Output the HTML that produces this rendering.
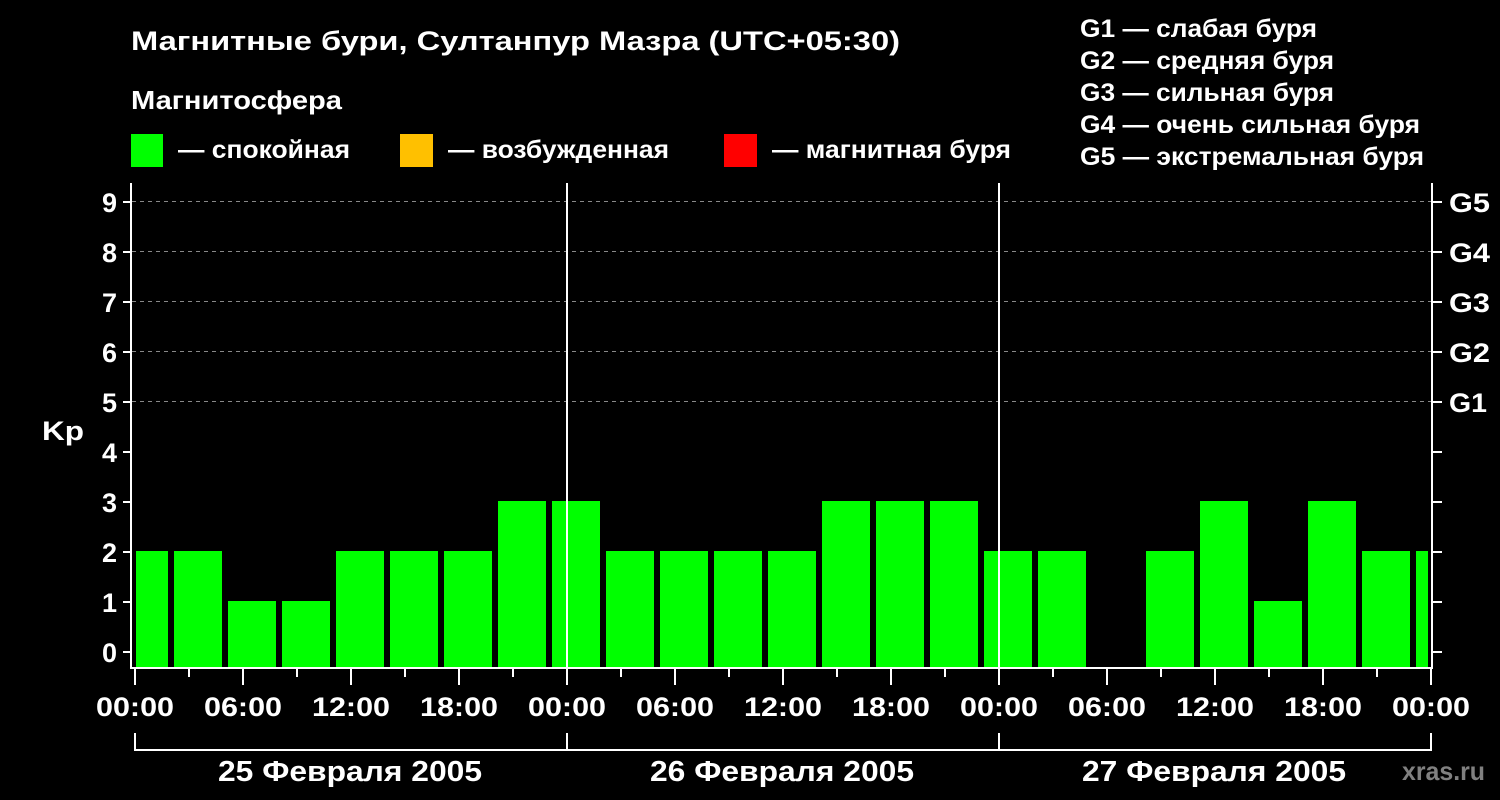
<!DOCTYPE html>
<html><head><meta charset="utf-8"><style>
html,body{margin:0;padding:0;background:#000;}
svg{display:block;}
text{font-family:"Liberation Sans",sans-serif;font-weight:bold;fill:#fff;}
</style></head><body>
<svg width="1500" height="800" viewBox="0 0 1500 800" xmlns="http://www.w3.org/2000/svg">
<rect width="1500" height="800" fill="#000"/>
<text x="131" y="50" font-size="27" textLength="769" lengthAdjust="spacingAndGlyphs">Магнитные бури, Султанпур Мазра (UTC+05:30)</text>
<text x="131" y="109" font-size="26" textLength="211" lengthAdjust="spacingAndGlyphs">Магнитосфера</text>
<rect x="131" y="134" width="32" height="33" fill="#00ff00"/>
<text x="178" y="158" font-size="25" textLength="172" lengthAdjust="spacingAndGlyphs">— спокойная</text>
<rect x="400" y="134" width="33" height="33" fill="#ffc000"/>
<text x="448" y="158" font-size="25" textLength="221" lengthAdjust="spacingAndGlyphs">— возбужденная</text>
<rect x="724" y="134" width="33" height="33" fill="#ff0000"/>
<text x="772" y="158" font-size="25" textLength="239" lengthAdjust="spacingAndGlyphs">— магнитная буря</text>
<g font-size="25">
<text x="1080" y="37" textLength="237" lengthAdjust="spacingAndGlyphs">G1 — слабая буря</text>
<text x="1080" y="69" textLength="254" lengthAdjust="spacingAndGlyphs">G2 — средняя буря</text>
<text x="1080" y="101" textLength="254" lengthAdjust="spacingAndGlyphs">G3 — сильная буря</text>
<text x="1080" y="133" textLength="340" lengthAdjust="spacingAndGlyphs">G4 — очень сильная буря</text>
<text x="1080" y="165" textLength="344" lengthAdjust="spacingAndGlyphs">G5 — экстремальная буря</text>
</g>
<g stroke="#888" stroke-width="1" stroke-dasharray="4,4">
<line x1="132" y1="201.5" x2="1432" y2="201.5"/>
<line x1="132" y1="251.5" x2="1432" y2="251.5"/>
<line x1="132" y1="301.5" x2="1432" y2="301.5"/>
<line x1="132" y1="351.5" x2="1432" y2="351.5"/>
<line x1="132" y1="401.5" x2="1432" y2="401.5"/>
</g>
<g fill="#00ff00">
<rect x="136" y="551" width="32" height="117"/>
<rect x="174" y="551" width="48" height="117"/>
<rect x="228" y="601" width="48" height="67"/>
<rect x="282" y="601" width="48" height="67"/>
<rect x="336" y="551" width="48" height="117"/>
<rect x="390" y="551" width="48" height="117"/>
<rect x="444" y="551" width="48" height="117"/>
<rect x="498" y="501" width="48" height="167"/>
<rect x="552" y="501" width="48" height="167"/>
<rect x="606" y="551" width="48" height="117"/>
<rect x="660" y="551" width="48" height="117"/>
<rect x="714" y="551" width="48" height="117"/>
<rect x="768" y="551" width="48" height="117"/>
<rect x="822" y="501" width="48" height="167"/>
<rect x="876" y="501" width="48" height="167"/>
<rect x="930" y="501" width="48" height="167"/>
<rect x="984" y="551" width="48" height="117"/>
<rect x="1038" y="551" width="48" height="117"/>
<rect x="1146" y="551" width="48" height="117"/>
<rect x="1200" y="501" width="48" height="167"/>
<rect x="1254" y="601" width="48" height="67"/>
<rect x="1308" y="501" width="48" height="167"/>
<rect x="1362" y="551" width="48" height="117"/>
<rect x="1416" y="551" width="12" height="117"/>
</g>
<g stroke="#fff" stroke-width="2" fill="none">
<polyline points="131,183 131,668 1432,668 1432,183"/>
<line x1="567" y1="183" x2="567" y2="668"/>
<line x1="999" y1="183" x2="999" y2="668"/>
<polyline points="135,733 135,750 1431,750 1431,733"/>
<line x1="567" y1="733" x2="567" y2="750"/>
<line x1="999" y1="733" x2="999" y2="750"/>
</g>
<g stroke="#fff" stroke-width="2">
<line x1="123" y1="652" x2="131" y2="652"/><line x1="123" y1="602" x2="131" y2="602"/>
<line x1="123" y1="552" x2="131" y2="552"/><line x1="123" y1="502" x2="131" y2="502"/>
<line x1="123" y1="452" x2="131" y2="452"/><line x1="123" y1="402" x2="131" y2="402"/>
<line x1="123" y1="352" x2="131" y2="352"/><line x1="123" y1="302" x2="131" y2="302"/>
<line x1="123" y1="252" x2="131" y2="252"/><line x1="123" y1="202" x2="131" y2="202"/>
<line x1="1432" y1="652" x2="1442" y2="652"/><line x1="1432" y1="602" x2="1442" y2="602"/>
<line x1="1432" y1="552" x2="1442" y2="552"/><line x1="1432" y1="502" x2="1442" y2="502"/>
<line x1="1432" y1="452" x2="1442" y2="452"/><line x1="1432" y1="402" x2="1442" y2="402"/>
<line x1="1432" y1="352" x2="1442" y2="352"/><line x1="1432" y1="302" x2="1442" y2="302"/>
<line x1="1432" y1="252" x2="1442" y2="252"/><line x1="1432" y1="202" x2="1442" y2="202"/>
</g>
<g stroke="#fff" stroke-width="2">
<line x1="135" y1="668" x2="135" y2="685"/><line x1="189" y1="668" x2="189" y2="677"/>
<line x1="243" y1="668" x2="243" y2="685"/><line x1="297" y1="668" x2="297" y2="677"/>
<line x1="351" y1="668" x2="351" y2="685"/><line x1="405" y1="668" x2="405" y2="677"/>
<line x1="459" y1="668" x2="459" y2="685"/><line x1="513" y1="668" x2="513" y2="677"/>
<line x1="567" y1="668" x2="567" y2="685"/><line x1="621" y1="668" x2="621" y2="677"/>
<line x1="675" y1="668" x2="675" y2="685"/><line x1="729" y1="668" x2="729" y2="677"/>
<line x1="783" y1="668" x2="783" y2="685"/><line x1="837" y1="668" x2="837" y2="677"/>
<line x1="891" y1="668" x2="891" y2="685"/><line x1="945" y1="668" x2="945" y2="677"/>
<line x1="999" y1="668" x2="999" y2="685"/><line x1="1053" y1="668" x2="1053" y2="677"/>
<line x1="1107" y1="668" x2="1107" y2="685"/><line x1="1161" y1="668" x2="1161" y2="677"/>
<line x1="1215" y1="668" x2="1215" y2="685"/><line x1="1269" y1="668" x2="1269" y2="677"/>
<line x1="1323" y1="668" x2="1323" y2="685"/><line x1="1377" y1="668" x2="1377" y2="677"/>
<line x1="1431" y1="668" x2="1431" y2="685"/>
</g>
<g font-size="27" text-anchor="end">
<text x="117" y="662">0</text><text x="117" y="612">1</text><text x="117" y="562">2</text>
<text x="117" y="512">3</text><text x="117" y="462">4</text><text x="117" y="412">5</text>
<text x="117" y="362">6</text><text x="117" y="312">7</text><text x="117" y="262">8</text>
<text x="117" y="212">9</text>
</g>
<text x="42" y="440" font-size="27" textLength="42" lengthAdjust="spacingAndGlyphs">Kp</text>
<g font-size="27">
<text x="1449" y="212" textLength="41" lengthAdjust="spacingAndGlyphs">G5</text>
<text x="1449" y="262" textLength="41" lengthAdjust="spacingAndGlyphs">G4</text>
<text x="1449" y="312" textLength="41" lengthAdjust="spacingAndGlyphs">G3</text>
<text x="1449" y="362" textLength="41" lengthAdjust="spacingAndGlyphs">G2</text>
<text x="1449" y="412" textLength="38" lengthAdjust="spacingAndGlyphs">G1</text>
</g>
<g font-size="27">
<text x="96" y="716" textLength="78" lengthAdjust="spacingAndGlyphs">00:00</text>
<text x="204" y="716" textLength="78" lengthAdjust="spacingAndGlyphs">06:00</text>
<text x="312" y="716" textLength="78" lengthAdjust="spacingAndGlyphs">12:00</text>
<text x="420" y="716" textLength="78" lengthAdjust="spacingAndGlyphs">18:00</text>
<text x="528" y="716" textLength="78" lengthAdjust="spacingAndGlyphs">00:00</text>
<text x="636" y="716" textLength="78" lengthAdjust="spacingAndGlyphs">06:00</text>
<text x="744" y="716" textLength="78" lengthAdjust="spacingAndGlyphs">12:00</text>
<text x="852" y="716" textLength="78" lengthAdjust="spacingAndGlyphs">18:00</text>
<text x="960" y="716" textLength="78" lengthAdjust="spacingAndGlyphs">00:00</text>
<text x="1068" y="716" textLength="78" lengthAdjust="spacingAndGlyphs">06:00</text>
<text x="1176" y="716" textLength="78" lengthAdjust="spacingAndGlyphs">12:00</text>
<text x="1284" y="716" textLength="78" lengthAdjust="spacingAndGlyphs">18:00</text>
<text x="1392" y="716" textLength="78" lengthAdjust="spacingAndGlyphs">00:00</text>
</g>
<g font-size="29">
<text x="218" y="781" textLength="264" lengthAdjust="spacingAndGlyphs">25 Февраля 2005</text>
<text x="650" y="781" textLength="264" lengthAdjust="spacingAndGlyphs">26 Февраля 2005</text>
<text x="1082" y="781" textLength="264" lengthAdjust="spacingAndGlyphs">27 Февраля 2005</text>
</g>
<text x="1402" y="780" font-size="26" style="fill:#808080" textLength="83" lengthAdjust="spacingAndGlyphs">xras.ru</text>
</svg>
</body></html>
